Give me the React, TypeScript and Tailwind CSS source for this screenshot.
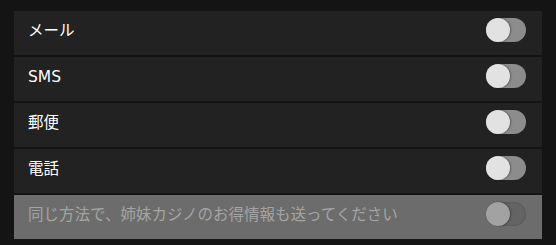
import { useState } from 'react';

interface Option {
  key: string;
  label: string;
  disabled?: boolean;
}

const options: Option[] = [
  { key: 'mail', label: 'メール' },
  { key: 'sms', label: 'SMS' },
  { key: 'post', label: '郵便' },
  { key: 'phone', label: '電話' },
  { key: 'sister', label: '同じ方法で、姉妹カジノのお得情報も送ってください', disabled: true },
];

function Toggle({ on, disabled, onChange }: { on: boolean; disabled?: boolean; onChange: () => void }) {
  return (
    <button
      type="button"
      onClick={disabled ? undefined : onChange}
      className={`relative h-[24px] w-[40px] shrink-0 rounded-full ${
        disabled ? 'bg-[#646464] shadow-[inset_0_0_2px_rgba(0,0,0,0.25)]' : 'bg-[#8c8c8c]'
      }`}
    >
      <span
        className={`absolute top-0 h-[24px] w-[24px] rounded-full shadow-[1px_0_2px_rgba(0,0,0,0.35)] ${
          disabled ? 'bg-[#a2a2a2]' : 'bg-[#e2e2e2]'
        } ${on ? 'left-[16px]' : 'left-0'}`}
      />
    </button>
  );
}

export default function App() {
  const [state, setState] = useState<Record<string, boolean>>({});

  return (
    <div
      className="min-h-[245px] w-full bg-[#141414] px-[14px] pt-[11px] pb-[6px]"
      style={{ fontFamily: '"DejaVu Sans", "Noto Sans CJK JP", sans-serif' }}
    >
      <div className="flex flex-col gap-[2px]">
        {options.map((o) => (
          <div
            key={o.key}
            className={`flex h-[44px] items-start justify-between pl-[14px] pr-[16px] ${
              o.disabled ? 'bg-[#6c6c6c]' : 'bg-[#222222]'
            }`}
          >
            <span
              className={`pt-[10px] text-[15.5px] leading-[20px] ${o.disabled ? 'text-[#a4a4a4]' : 'text-white'}`}
            >
              {o.label}
            </span>
            <div className="self-center">
              <Toggle
                on={!!state[o.key]}
                disabled={o.disabled}
                onChange={() => setState((s) => ({ ...s, [o.key]: !s[o.key] }))}
              />
            </div>
          </div>
        ))}
      </div>
    </div>
  );
}
